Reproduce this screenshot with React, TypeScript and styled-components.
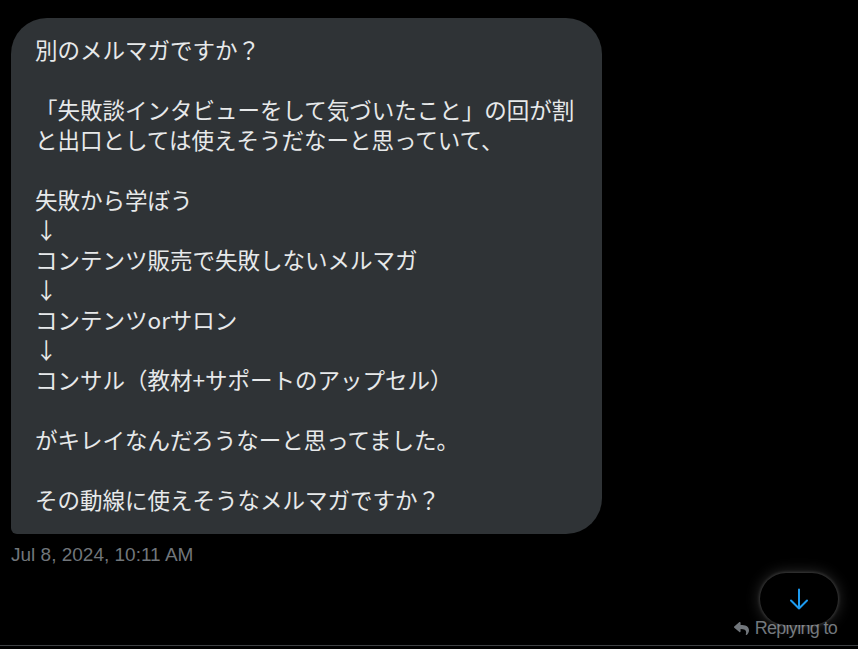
import React from "react";
import styled, { createGlobalStyle } from "styled-components";
import { FaReply } from "react-icons/fa";

const GlobalStyle = createGlobalStyle`
  html, body {
    margin: 0;
    padding: 0;
    background: #000;
  }
  body {
    font-family: "Liberation Sans", "Noto Sans CJK JP", sans-serif;
  }
`;

const message = `別のメルマガですか？

「失敗談インタビューをして気づいたこと」の回が割と出口としては使えそうだなーと思っていて、

失敗から学ぼう
↓
コンテンツ販売で失敗しないメルマガ
↓
コンテンツorサロン
↓
コンサル（教材+サポートのアップセル）

がキレイなんだろうなーと思ってました。

その動線に使えそうなメルマガですか？`;

export default function App() {
  return (
    <>
      <GlobalStyle />
      <Page>
        <Thread>
          <Message>
            <Bubble>{message}</Bubble>
            <Timestamp>Jul 8, 2024, 10:11 AM</Timestamp>
          </Message>
        </Thread>
        <ReplyHint>
          <FaReply size={15} />
          <span>Replying to</span>
        </ReplyHint>
        <Composer />
        <ScrollDownButton aria-label="Scroll to bottom">
          <svg width="24" height="24" viewBox="0 0 24 24" fill="none">
            <path
              d="M12 2.5v19M4 13.5l8 8 8-8"
              stroke="#1d9bf0"
              strokeWidth="2"
              strokeLinecap="round"
              strokeLinejoin="round"
            />
          </svg>
        </ScrollDownButton>
      </Page>
    </>
  );
}

const Page = styled.div`
  position: relative;
  height: 649px;
  display: flex;
  flex-direction: column;
  overflow: hidden;
`;

const Thread = styled.div`
  flex: 1;
  padding: 18px 0 0 11px;
`;

const Message = styled.div`
  display: flex;
  flex-direction: column;
  align-items: flex-start;
`;

const Bubble = styled.div`
  box-sizing: border-box;
  width: 591px;
  padding: 16px 24px 20px;
  background: #2f3336;
  color: #e7e9ea;
  border-radius: 36px 36px 36px 6px;
  font-family: "Noto Sans CJK JP", "Liberation Sans", sans-serif;
  font-size: 22.5px;
  line-height: 30px;
  white-space: pre-wrap;
  word-break: break-all;
`;

const Timestamp = styled.div`
  margin-top: 9px;
  color: #71767b;
  font-size: 19px;
  line-height: 23px;
`;

const ReplyHint = styled.div`
  display: flex;
  align-items: center;
  justify-content: flex-end;
  gap: 6px;
  padding: 0 21px 6px 0;
  color: #71767b;
  font-size: 18px;
  line-height: 22px;
  letter-spacing: -0.7px;
`;

const Composer = styled.div`
  height: 3px;
  border-top: 1px solid #3e4144;
`;

const ScrollDownButton = styled.button`
  position: absolute;
  right: 20px;
  bottom: 24px;
  width: 78px;
  height: 52px;
  border: none;
  border-radius: 26px;
  background: #000;
  display: flex;
  align-items: center;
  justify-content: center;
  box-shadow: rgba(255, 255, 255, 0.2) 0 0 15px,
    rgba(255, 255, 255, 0.15) 0 0 3px 1px;
  cursor: pointer;
`;
